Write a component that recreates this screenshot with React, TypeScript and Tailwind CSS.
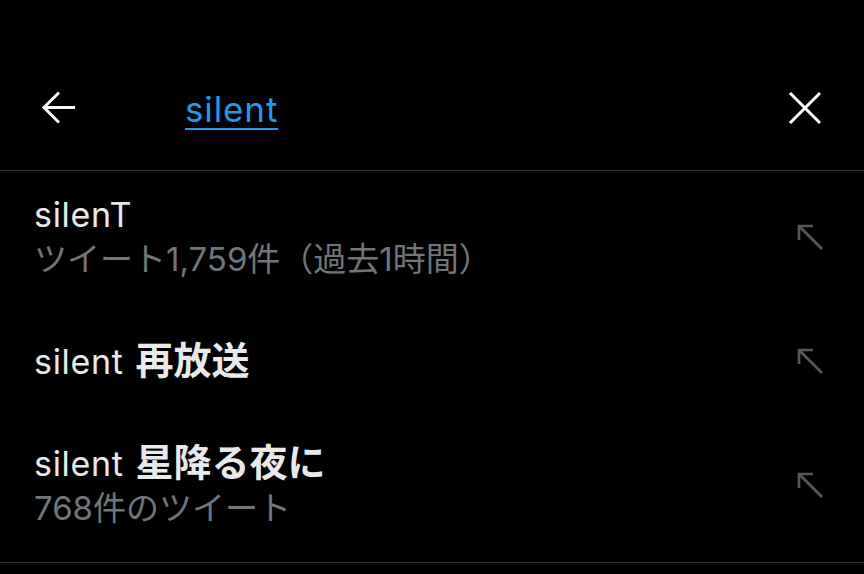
import React from "react";

const font = { fontFamily: '"Inter", "Noto Sans CJK JP", sans-serif' };

function NWArrow() {
  return (
    <svg width="28" height="28" viewBox="0 0 28 28" fill="none" stroke="#55595d" strokeWidth="2.7" strokeLinecap="butt" strokeLinejoin="miter">
      <path d="M3 17 V3 H17" />
      <path d="M3 3 L26 26" />
    </svg>
  );
}

type Item = { plain: string; bold?: string; sub?: string };

const items: Item[] = [
  { plain: "silenT", sub: "ツイート1,759件（過去1時間）" },
  { plain: "silent", bold: "再放送" },
  { plain: "silent", bold: "星降る夜に", sub: "768件のツイート" },
];

export default function App() {
  return (
    <div className="w-[864px] h-[574px] bg-black overflow-hidden" style={font}>
      <div className="h-[171px] pt-[46px] flex items-center border-b border-[#2f3336]">
        <div className="w-[185px] pl-[41px] flex items-center">
          <svg width="36" height="36" viewBox="0 0 36 36" fill="none" stroke="white" strokeWidth="3">
            <path d="M34 17.5 H3" />
            <path d="M18 2.5 L3 17.5 L18 32.5" />
          </svg>
        </div>
        <div className="flex-1 text-[35px] tracking-[0.025em] leading-none text-[#1d9bf0] underline decoration-2 underline-offset-[6px] mt-[2px]">
          silent
        </div>
        <div className="pr-[42px]">
          <svg width="34" height="34" viewBox="0 0 34 34" fill="none" stroke="white" strokeWidth="3">
            <path d="M2 2 L32 32 M32 2 L2 32" />
          </svg>
        </div>
      </div>
      <div className="pt-[4px]">
        {items.map((it, i) => (
          <div key={i} className="h-[124px] flex items-center pl-[34px] pr-[40px]">
            <div className="flex-1 flex flex-col">
              <div className="text-[34px] tracking-[0.02em] leading-[44px] text-[#e7e9ea] whitespace-nowrap">
                {it.plain}
                {it.bold && (
                  <>
                    <span className="inline-block w-[12px]" />
                    <span className="font-bold text-[38px] tracking-normal">{it.bold}</span>
                  </>
                )}
              </div>
              {it.sub && (
                <div className="text-[33px] leading-[44px] text-[#71767b] whitespace-nowrap">{it.sub}</div>
              )}
            </div>
            <NWArrow />
          </div>
        ))}
      </div>
      <div className="mt-[15px] border-t border-[#2f3336]" />
    </div>
  );
}
